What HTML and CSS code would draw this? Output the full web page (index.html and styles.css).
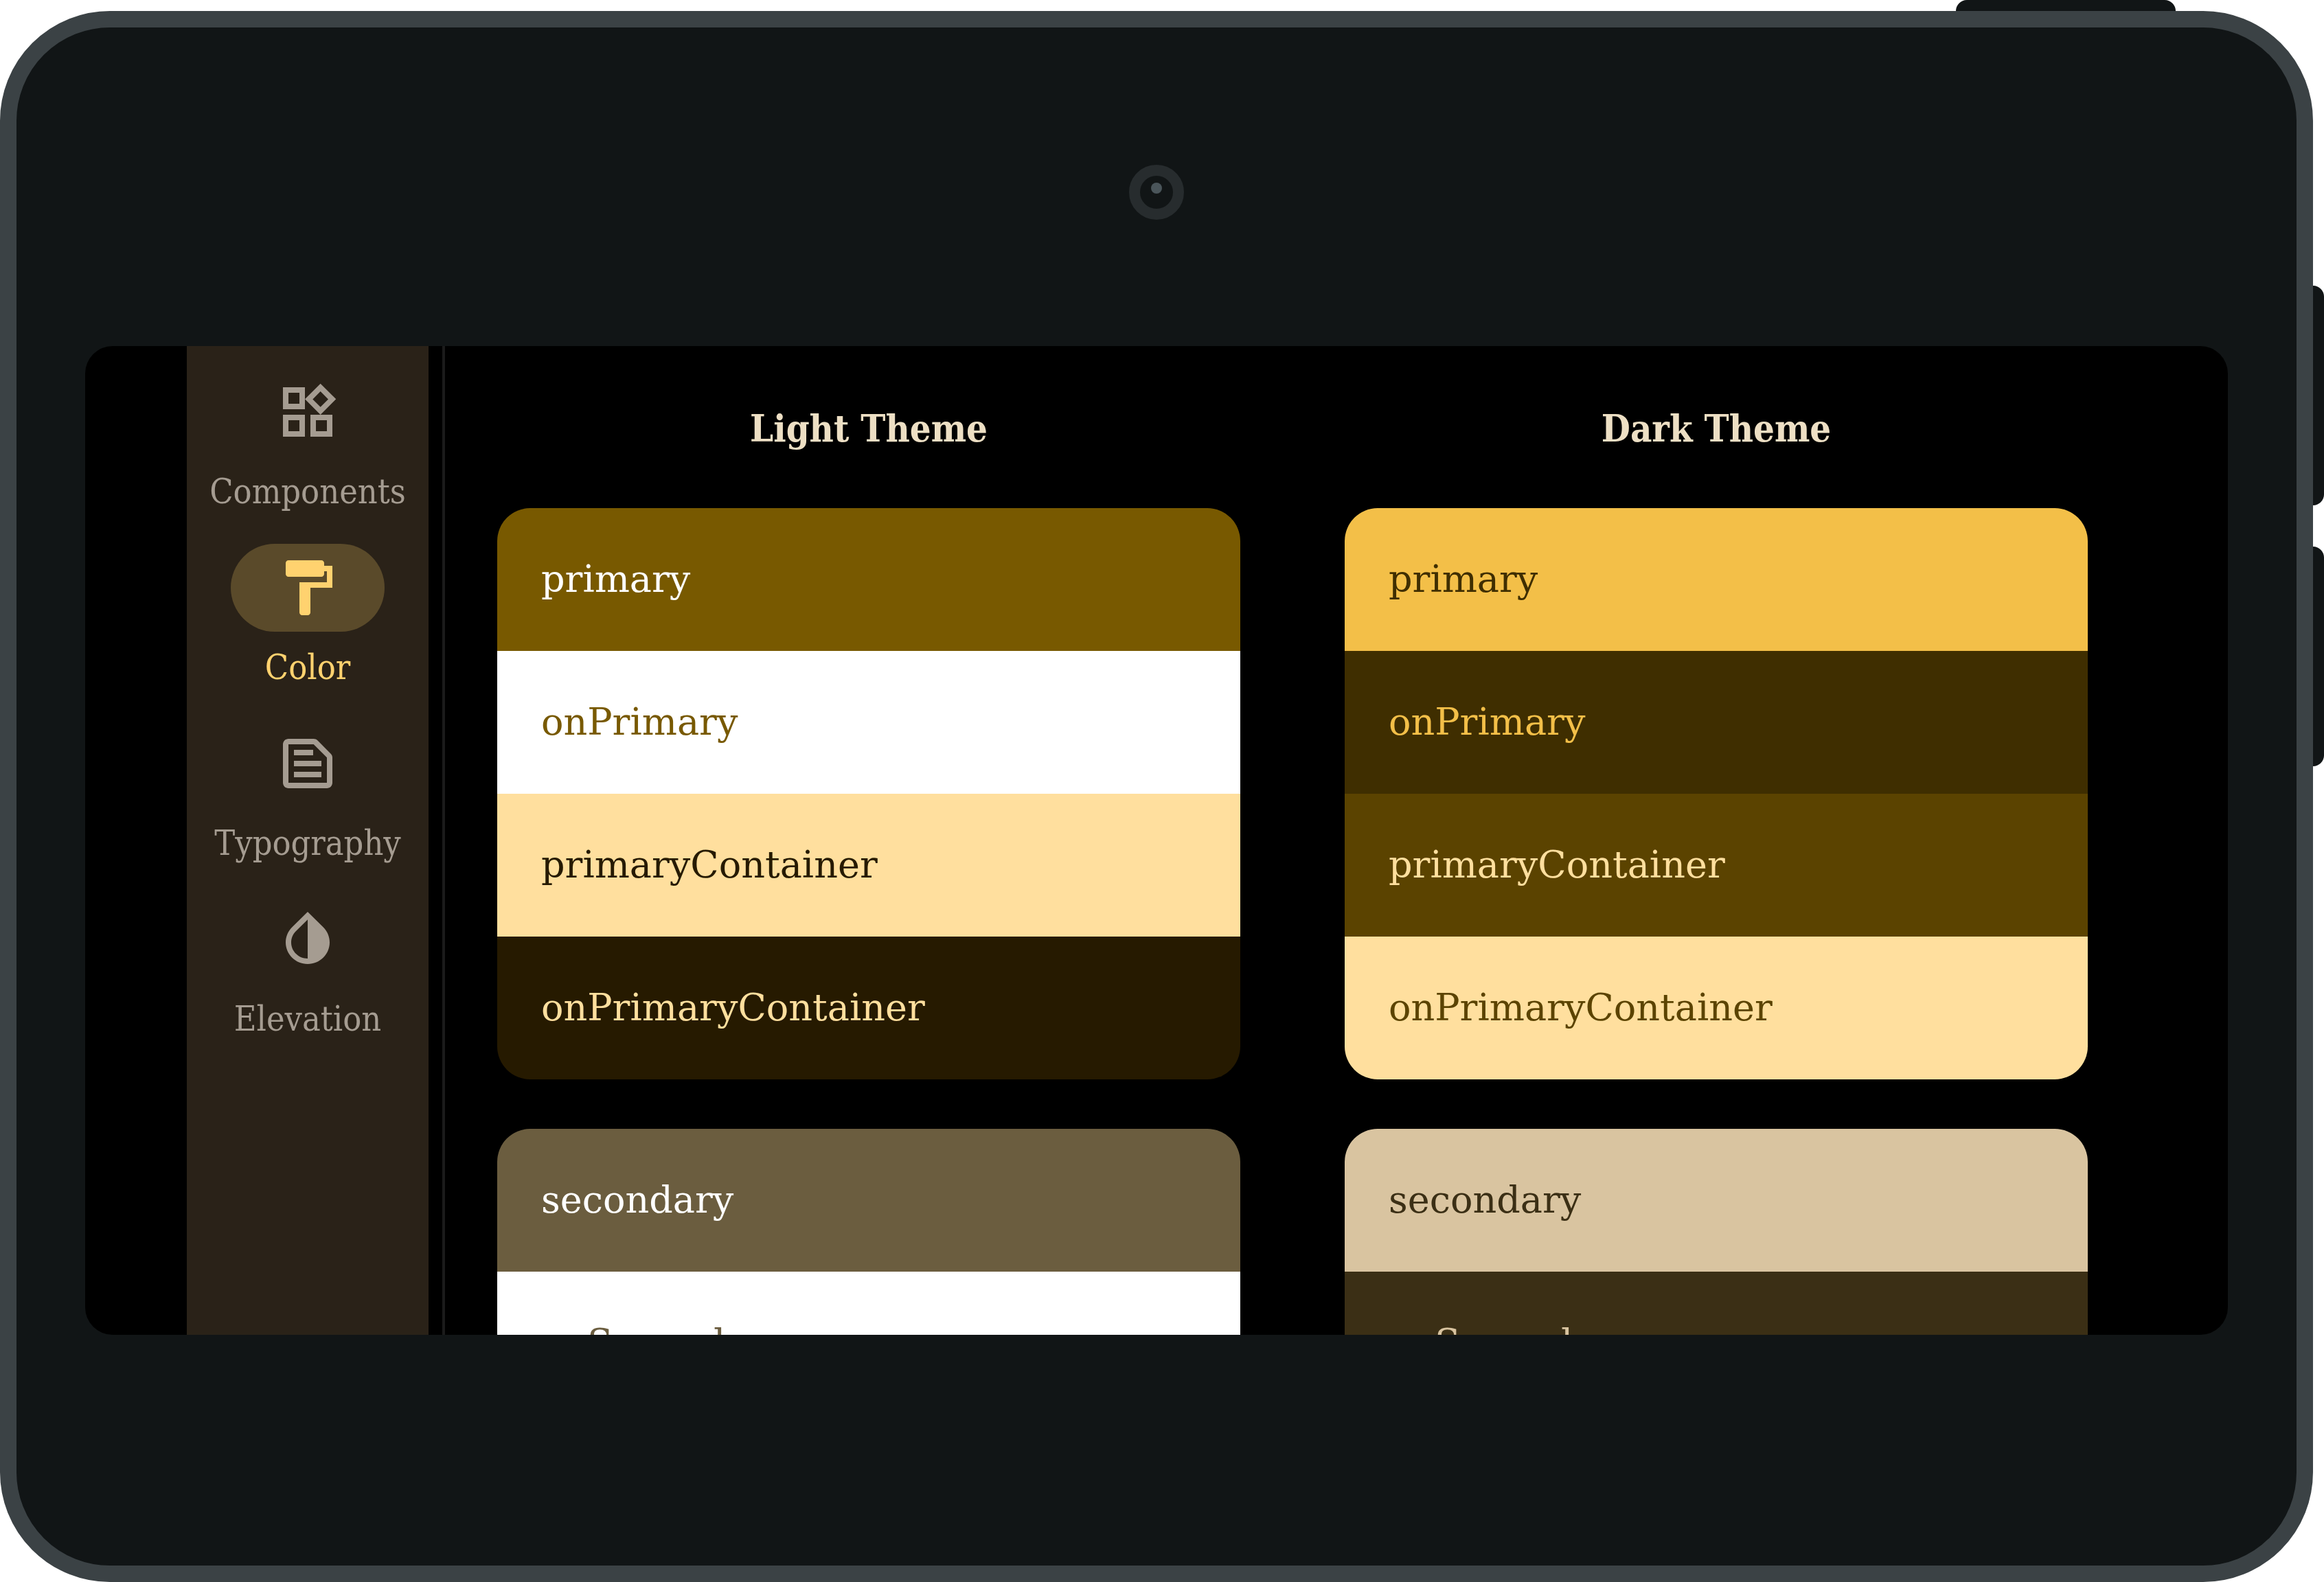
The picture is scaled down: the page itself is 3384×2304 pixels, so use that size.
FILE: index.html
```html
<!DOCTYPE html>
<html lang="en">
<head>
  <meta charset="utf-8">
  <meta name="viewport" content="width=device-width, initial-scale=1">
  <title>Color</title>
  <link rel="stylesheet" href="styles.css">
</head>
<body>
  <div class="device">
    <span class="key key-power"></span>
    <span class="key key-volume-up"></span>
    <span class="key key-volume-down"></span>
    <div class="bezel">
      <div class="camera"><span class="camera-glint"></span></div>
      <div class="screen">
        <nav class="rail">
          <a class="rail-item" href="#components">
            <span class="rail-icon"><svg viewBox="0 0 24 24" aria-hidden="true"><path d="M16.66 4.52l2.83 2.83-2.83 2.83-2.83-2.83 2.83-2.83M9 5v4H5V5h4m10 10v4h-4v-4h4M9 15v4H5v-4h4m7.66-13.31L11 7.34 16.66 13l5.66-5.66-5.66-5.65zM11 3H3v8h8V3zm10 10h-8v8h8v-8zm-10 0H3v8h8v-8z"/></svg></span>
            <span class="rail-label">Components</span>
          </a>
          <a class="rail-item is-active" href="#color" aria-current="page">
            <span class="rail-icon"><svg viewBox="0 0 24 24" aria-hidden="true"><path d="M18 4V3c0-.55-.45-1-1-1H5c-.55 0-1 .45-1 1v4c0 .55.45 1 1 1h12c.55 0 1-.45 1-1V6h1v4H9v11c0 .55.45 1 1 1h2c.55 0 1-.45 1-1v-9h8V4h-3z"/></svg></span>
            <span class="rail-label">Color</span>
          </a>
          <a class="rail-item" href="#typography">
            <span class="rail-icon"><svg viewBox="0 0 24 24" aria-hidden="true"><path d="M14.17 5L19 9.83V19H5V5h9.17m0-2H5c-1.1 0-2 .9-2 2v14c0 1.1.9 2 2 2h14c1.1 0 2-.9 2-2V9.83c0-.53-.21-1.04-.59-1.41l-4.83-4.83c-.37-.38-.88-.59-1.41-.59zM7 15h10v2H7v-2zm0-4h10v2H7v-2zm0-4h7v2H7V7z"/></svg></span>
            <span class="rail-label">Typography</span>
          </a>
          <a class="rail-item" href="#elevation">
            <span class="rail-icon"><svg viewBox="0 0 24 24" aria-hidden="true"><path d="M12 4.81V19c-3.31 0-6-2.63-6-5.87 0-1.56.62-3.03 1.75-4.14L12 4.81M6.35 7.56C4.9 8.99 4 10.96 4 13.13 4 17.48 7.58 21 12 21s8-3.52 8-7.87c0-2.17-.9-4.14-2.35-5.57L12 2 6.35 7.56z"/></svg></span>
            <span class="rail-label">Elevation</span>
          </a>
        </nav>
        <main class="themes">
          <section class="theme theme-light">
            <h2 class="theme-title">Light Theme</h2>
            <ul class="palette">
              <li class="swatch primary">primary</li>
              <li class="swatch on-primary">onPrimary</li>
              <li class="swatch primary-container">primaryContainer</li>
              <li class="swatch on-primary-container">onPrimaryContainer</li>
            </ul>
            <ul class="palette">
              <li class="swatch secondary">secondary</li>
              <li class="swatch on-secondary">onSecondary</li>
            </ul>
          </section>
          <section class="theme theme-dark">
            <h2 class="theme-title">Dark Theme</h2>
            <ul class="palette">
              <li class="swatch primary">primary</li>
              <li class="swatch on-primary">onPrimary</li>
              <li class="swatch primary-container">primaryContainer</li>
              <li class="swatch on-primary-container">onPrimaryContainer</li>
            </ul>
            <ul class="palette">
              <li class="swatch secondary">secondary</li>
              <li class="swatch on-secondary">onSecondary</li>
            </ul>
          </section>
        </main>
      </div>
    </div>
  </div>
</body>
</html>
```
FILE: styles.css
```css
* {
  box-sizing: border-box;
}

body {
  margin: 0;
  background: #fff;
  font-family: "Roboto Slab", "DejaVu Serif Condensed", "DejaVu Serif", serif;
}

/* Tablet body: the hardware keys stick out of the top and right edges */
.device {
  position: relative;
  padding: 16px 16px 0 0;
}

.key {
  position: absolute;
  background: #111516;
}

.key-power {
  top: 0;
  right: 216px;
  width: 320px;
  height: 16px;
  border-radius: 16px 16px 0 0;
}

.key-volume-up,
.key-volume-down {
  right: 0;
  width: 16px;
  height: 320px;
  border-radius: 0 16px 16px 0;
}

.key-volume-up {
  top: 416px;
}

.key-volume-down {
  top: 796px;
}

.bezel {
  display: flex;
  flex-direction: column;
  padding: 200px 100px 336px;
  border: 24px solid #3b4245;
  border-radius: 160px;
  background: #111516;
}

.camera {
  display: flex;
  justify-content: center;
  align-self: center;
  width: 80px;
  height: 80px;
  margin-bottom: 184px;
  padding-top: 10px;
  border: 16px solid #272c2e;
  border-radius: 50%;
}

.camera-glint {
  width: 16px;
  height: 16px;
  border-radius: 50%;
  background: #4a555a;
}

.screen {
  display: flex;
  aspect-ratio: 13 / 6;
  min-height: 0;
  padding: 0 128px 0 148px;
  overflow: hidden;
  border-radius: 40px;
  background: #000;
}

/* Navigation rail */
.rail {
  display: flex;
  flex: none;
  flex-direction: column;
  gap: 44px;
  width: 352px;
  padding-top: 32px;
  background: #2a2218;
}

.rail-item {
  display: flex;
  flex-direction: column;
  align-items: center;
  gap: 20px;
  color: #a59c91;
  text-decoration: none;
}

.rail-icon {
  display: flex;
  align-items: center;
  justify-content: center;
  width: 224px;
  height: 128px;
  border-radius: 64px;
}

.rail-icon svg {
  width: 96px;
  height: 96px;
  fill: currentColor;
}

.rail-label {
  font-size: 50px;
  line-height: 64px;
}

.is-active {
  color: #ffd26f;
}

.is-active .rail-icon {
  background: #5a4a2a;
}

/* Theme columns */
.themes {
  display: grid;
  flex: 1;
  grid-template-columns: 1fr 1fr;
  margin-left: 20px;
  border-left: 4px solid #1b1b1b;
}

.theme {
  height: 0;
  padding: 80px 76px 0;
}

.theme-title {
  margin: 0 0 76px;
  color: #eddfc4;
  font-size: 54px;
  font-weight: 700;
  line-height: 80px;
  text-align: center;
}

.palette {
  margin: 0 0 72px;
  padding: 0;
  overflow: hidden;
  border-radius: 48px;
  list-style: none;
}

.swatch {
  padding: 64px;
  font-family: "Roboto Slab", "DejaVu Serif", serif;
  font-size: 54px;
  line-height: 80px;
}

.theme-light .primary {
  background: #785900;
  color: #fff;
}

.theme-light .on-primary {
  background: #fff;
  color: #785900;
}

.theme-light .primary-container {
  background: #ffdf9e;
  color: #261a00;
}

.theme-light .on-primary-container {
  background: #261a00;
  color: #ffdf9e;
}

.theme-light .secondary {
  background: #6b5d3f;
  color: #fff;
}

.theme-light .on-secondary {
  background: #fff;
  color: #6b5d3f;
}

.theme-dark .primary {
  background: #f3bf48;
  color: #3f2e00;
}

.theme-dark .on-primary {
  background: #3f2e00;
  color: #f3bf48;
}

.theme-dark .primary-container {
  background: #5b4300;
  color: #ffdf9e;
}

.theme-dark .on-primary-container {
  background: #ffdf9e;
  color: #5b4300;
}

.theme-dark .secondary {
  background: #d9c4a0;
  color: #3b2f15;
}

.theme-dark .on-secondary {
  background: #3b2f15;
  color: #d9c4a0;
}
```
